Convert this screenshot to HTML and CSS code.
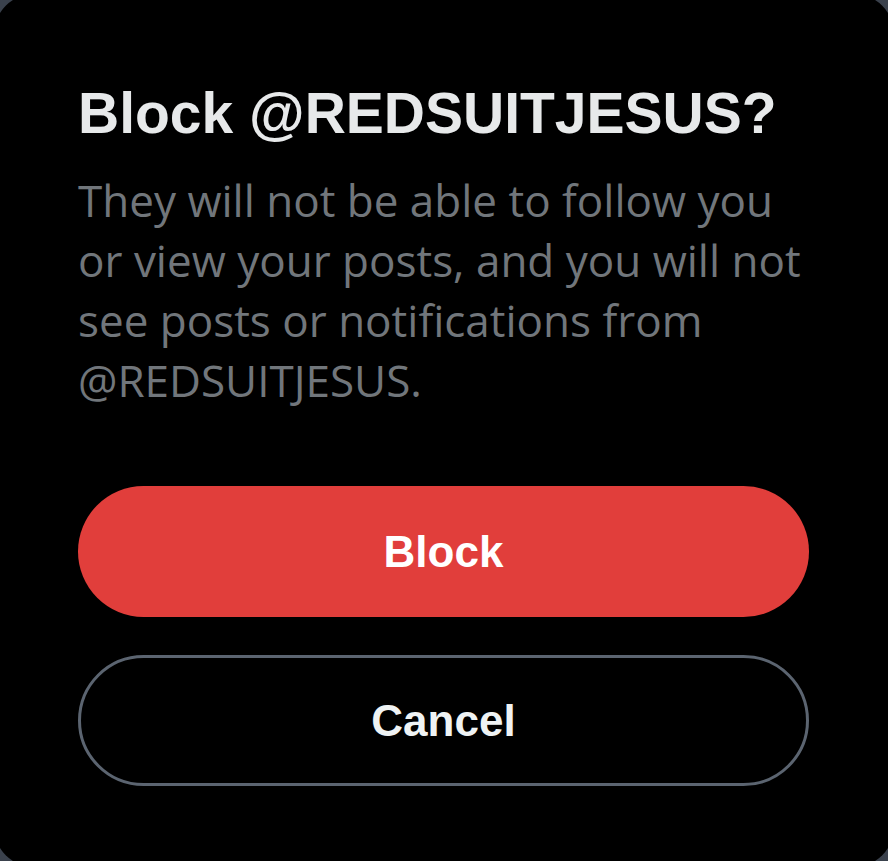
FILE: index.html
```html
<!DOCTYPE html>
<html lang="en">
<head>
  <meta charset="UTF-8" />
  <meta name="viewport" content="width=device-width, initial-scale=1.0" />
  <title>Block @REDSUITJESUS?</title>
  <link rel="stylesheet" href="styles.css">
</head>
<body>
  <div class="dialog">
    <h1 class="title">Block @REDSUITJESUS?</h1>
    <p class="text">They will not be able to follow you or view your posts, and you will not see posts or notifications from @REDSUITJESUS.</p>

    <div class="actions">
      <button class="btn btn-block">Block</button>
      <button class="btn btn-cancel">Cancel</button>
    </div>
  </div>
</body>
</html>
```

FILE: styles.css
```css
html, body {
  height: 100%;
}
body {
  margin: 0;
  padding: 0;
  overflow: hidden;
  background-color: #3a414c;
  font-family: "Liberation Sans", Arial, sans-serif;
}
.dialog {
  box-sizing: border-box;
  margin: -6px;
  height: calc(100% + 12px);
  background-color: #000000;
  border-radius: 40px;
  padding: 83px 84px 0 84px;
}
.title {
  margin: 0;
  color: #e7e9ea;
  font-size: 57px;
  font-weight: bold;
  line-height: 72px;
}
.text {
  margin: 21px 0 0 0;
  width: 731px;
  color: #71767b;
  font-family: "Open Sans", sans-serif;
  font-size: 44px;
  line-height: 60px;
}
.actions {
  display: flex;
  flex-direction: column;
  gap: 38px;
  margin-top: 76px;
}
.btn {
  box-sizing: border-box;
  width: 731px;
  height: 131px;
  border-radius: 66px;
  font-family: inherit;
  font-size: 44px;
  font-weight: bold;
  cursor: pointer;
}
.btn-block {
  background-color: #e13e3b;
  color: #ffffff;
  border: none;
}
.btn-cancel {
  background-color: #000000;
  color: #eff3f4;
  border: 3px solid #5b6470;
}
```
